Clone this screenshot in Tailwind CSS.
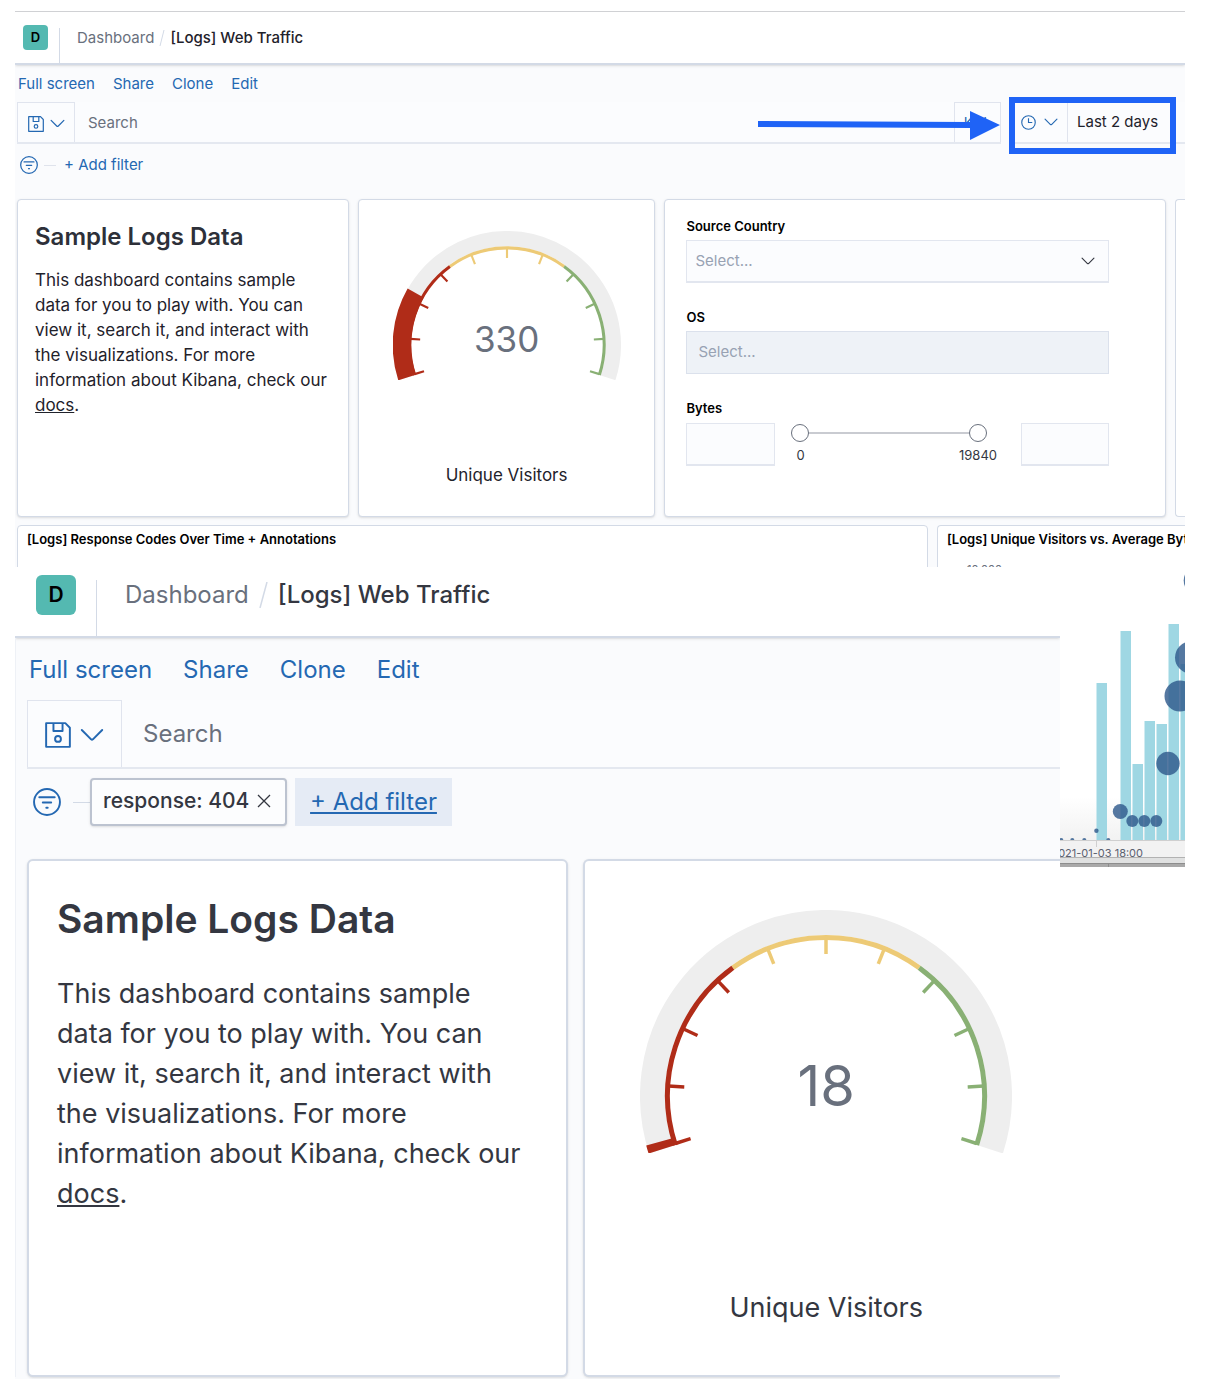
<!DOCTYPE html>
<html lang="en">
<head>
<meta charset="utf-8">
<title>[Logs] Web Traffic</title>
<script src="https://cdn.jsdelivr.net/npm/@tailwindcss/browser@4"></script>
</head>
<body class="bg-white font-['Inter',sans-serif] text-[#1f222b]">
<svg class="hidden">
  <symbol id="save" viewBox="0 0 16 16"><path fill="none" stroke="currentColor" stroke-width="1.2" stroke-linejoin="round" d="M.7.7h11.8l2.8 2.8v11.8H.7zM5.2.7v4.8h5.6V.7"/><circle cx="8" cy="10.4" r="1.8" fill="none" stroke="currentColor" stroke-width="1.2"/></symbol>
  <symbol id="down" viewBox="0 0 16 16"><path fill="none" stroke="currentColor" stroke-width="1.3" stroke-linecap="round" stroke-linejoin="round" d="M1.2 4.7 7.4 10.9q.6.5 1.2 0L14.8 4.7"/></symbol>
  <symbol id="filter" viewBox="0 0 16 16"><circle cx="8" cy="8" r="7.4" fill="none" stroke="currentColor" stroke-width="1.1"/><path fill="none" stroke="currentColor" stroke-linecap="round" stroke-width="1.1" d="M3.6 5.3h8.8M5.6 8.3h4.8M7.6 11.3h.8"/></symbol>
  <symbol id="dial" viewBox="-186 -186 372 243">
    <path fill="none" stroke="#eee" stroke-width="25" d="M-165 53.6A173.5 173.5 0 1 1 165 53.6"/>
    <g fill="none" stroke-width="5">
      <path stroke="#edca76" d="M-93.2-128.2A158.5 158.5 0 0 1 93.2-128.2"/>
      <path stroke="#b02c18" d="M-150.7 49A158.5 158.5 0 0 1-93.2-128.2"/>
      <path stroke="#89b074" d="M93.2-128.2A158.5 158.5 0 0 1 150.7 49"/>
    </g>
    <g stroke="#b02c18" stroke-width="3.5">
      <path d="M0-158V-142" transform="rotate(-107.5)"/><path d="M0-158V-142" transform="rotate(-86.4)"/><path d="M0-158V-142" transform="rotate(-64.8)"/><path d="M0-158V-142" transform="rotate(-43.2)"/>
    </g>
    <g stroke="#edca76" stroke-width="3.5">
      <path d="M0-158V-142" transform="rotate(-21.6)"/><path d="M0-158V-142"/><path d="M0-158V-142" transform="rotate(21.6)"/>
    </g>
    <g stroke="#89b074" stroke-width="3.5">
      <path d="M0-158V-142" transform="rotate(43.2)"/><path d="M0-158V-142" transform="rotate(64.8)"/><path d="M0-158V-142" transform="rotate(86.4)"/><path d="M0-158V-142" transform="rotate(107.5)"/>
    </g>
  </symbol>
</svg>

<main class="pt-[11px] pr-[43px] pl-[15px]">
  <!-- Dashboard with the time picker highlighted -->
  <section class="relative h-[556px] overflow-hidden border-t border-[#d0d1d4] bg-[#fafbfd]">
    <header class="flex h-[53px] items-start border-b-2 border-[#d3dae6] bg-white shadow-sm">
      <button class="mt-[13px] ml-2 h-[25px] w-[25px] rounded bg-[#54b9b1] text-[13px] font-semibold text-black">D</button>
      <div class="mt-4 ml-[11px] h-[35px] w-px bg-[#d3dae6]"></div>
      <nav class="mt-4 ml-[17px] flex items-center text-[15px] leading-5">
        <a href="#" class="text-[#69707d]">Dashboard</a>
        <svg class="mx-[5px] h-4 w-[6px]" viewBox="0 0 6 16"><path d="M1 16 5 0" stroke="#d3dae6"/></svg>
        <span class="font-medium">[Logs] Web Traffic</span>
      </nav>
    </header>
    <nav class="flex h-[37px] items-center gap-[18px] pt-0.5 pl-[3px] text-[15px] text-[#2468b2]">
      <a href="#">Full screen</a><a href="#">Share</a><a href="#">Clone</a><a href="#">Edit</a>
    </nav>
    <div class="flex h-[42px] pl-0.5">
      <div class="flex min-w-0 flex-1 border-b-2 border-[#e4e8f0] bg-[#fbfcfe]">
        <button aria-label="Saved queries" class="flex w-[58px] items-center justify-center gap-1.5 border border-b-0 border-[#e0e4ee] pt-0.5 text-[#2468b2]"><svg class="h-4 w-4"><use href="#save"/></svg><svg class="h-[15px] w-[15px]"><use href="#down"/></svg></button>
        <input aria-label="Search" placeholder="Search" class="min-w-0 flex-1 px-[13px] pt-0.5 text-[15px] outline-none placeholder:text-[#69707d]">
        <button class="w-[47px] border border-b-0 border-[#e0e4ee] text-[14px] text-[#2468b2]">KQL</button>
      </div>
      <div class="ml-3 flex w-[172px] border-b-2 border-[#e4e8f0] bg-[#fbfcfe]">
        <button aria-label="Quick time ranges" class="flex w-[55px] items-center gap-2 border-r border-[#e0e4ee] pl-2 text-[#2468b2]"><svg class="h-[15px] w-[15px]" viewBox="0 0 16 16"><circle cx="8" cy="8" r="7.2" fill="none" stroke="currentColor" stroke-width="1.2"/><path d="M8 3.5V8h4" fill="none" stroke="currentColor" stroke-width="1.2"/></svg><svg class="h-[14px] w-[14px]"><use href="#down"/></svg></button>
        <button class="px-[9px] text-[15px] whitespace-nowrap">Last 2 days</button>
      </div>
    </div>
    <div class="flex h-[42px] items-center pl-[5px] text-[15px] text-[#2468b2]">
      <svg class="h-[18px] w-[18px]"><use href="#filter"/></svg>
      <div class="mr-2 ml-1.5 h-px w-3 bg-[#dfe3ec]"></div>
      <button>+ Add filter</button>
    </div>

    <div class="mt-[13px] grid h-[318px] grid-cols-[332fr_298fr_502fr_10px] gap-[9px] pl-0.5">
      <article class="rounded border border-[#d3dae6] bg-white px-[17px] pt-[19px] shadow-sm">
        <h1 class="text-[24px] leading-9 font-semibold text-[#2d3039]">Sample Logs Data</h1>
        <p class="mt-[13px] text-[17px] leading-[25px] whitespace-nowrap">This dashboard contains sample<br>data for you to play with. You can<br>view it, search it, and interact with<br>the visualizations. For more<br>information about Kibana, check our<br><a href="#" class="underline">docs</a>.</p>
      </article>
      <article class="rounded border border-[#d3dae6] bg-white pt-[31px] text-center shadow-sm">
        <div class="relative mx-auto w-[228px]">
          <svg class="block w-full" viewBox="-186 -186 372 243"><use href="#dial" x="-186" y="-186" width="372" height="243"/><path fill="none" stroke="#b02c18" stroke-width="30" d="M-163.1 53A171.5 171.5 0 0 1-149.1-84.7"/></svg>
          <div class="absolute inset-x-0 bottom-[17px] text-[35px] leading-[48px] text-[#69707d]">330</div>
        </div>
        <div class="mt-[83px] text-[17px] leading-6">Unique Visitors</div>
      </article>
      <article class="rounded border border-[#d3dae6] bg-white pt-4 pr-[56px] pl-[21px] text-[13px] font-semibold text-black shadow-sm">
        <label for="country" class="block leading-5">Source Country</label>
        <div class="relative mt-1">
          <select id="country" class="h-[43px] w-full appearance-none border border-b-2 border-[#e2e6ef] bg-[#fbfcfe] px-2 text-[15px] font-normal text-[#98a2b3]"><option>Select...</option></select>
          <svg class="pointer-events-none absolute top-[14px] right-[14px] h-[14px] w-[14px] text-[#343741]"><use href="#down"/></svg>
        </div>
        <label for="os" class="mt-6 block leading-5">OS</label>
        <select id="os" disabled class="mt-1 block h-[43px] w-full appearance-none border border-[#dbe1ec] bg-[#eef2f7] px-[11px] text-[15px] font-normal text-[#98a2b3] opacity-100"><option>Select...</option></select>
        <label for="low" class="mt-6 block leading-5">Bytes</label>
        <div class="mt-[5px] flex items-start">
          <input id="low" aria-label="Minimum bytes" class="h-[43px] w-[89px] border border-b-2 border-[#e2e6ef] bg-[#fbfcfe] px-2 text-[15px]">
          <div class="mr-[34px] ml-4 flex-1">
            <div class="relative h-5">
              <div class="absolute inset-x-2 top-[9px] h-0.5 bg-[#c9cbd1]"></div>
              <input type="range" aria-label="Lower bound" min="0" max="19840" value="0" class="absolute inset-0 h-5 w-full appearance-none bg-transparent [&::-webkit-slider-thumb]:h-[18px] [&::-webkit-slider-thumb]:w-[18px] [&::-webkit-slider-thumb]:appearance-none [&::-webkit-slider-thumb]:rounded-full [&::-webkit-slider-thumb]:border [&::-webkit-slider-thumb]:border-[#69707d] [&::-webkit-slider-thumb]:bg-white">
              <input type="range" aria-label="Upper bound" min="0" max="19840" value="19840" class="pointer-events-none absolute inset-0 h-5 w-full appearance-none bg-transparent [&::-webkit-slider-thumb]:pointer-events-auto [&::-webkit-slider-thumb]:h-[18px] [&::-webkit-slider-thumb]:w-[18px] [&::-webkit-slider-thumb]:appearance-none [&::-webkit-slider-thumb]:rounded-full [&::-webkit-slider-thumb]:border [&::-webkit-slider-thumb]:border-[#69707d] [&::-webkit-slider-thumb]:bg-white">
            </div>
            <div class="-mr-2.5 flex justify-between pt-0.5 pl-[5px] text-[13px] leading-5 font-normal text-[#343741]"><span>0</span><span>19840</span></div>
          </div>
          <input aria-label="Maximum bytes" class="h-[43px] w-[88px] border border-b-2 border-[#e2e6ef] bg-[#fbfcfe] px-2 text-[15px]">
        </div>
      </article>
      <article class="rounded-l border border-r-0 border-[#d3dae6] bg-white"></article>
    </div>
    <div class="mt-2 grid h-[80px] grid-cols-[911fr_248fr] gap-[9px] pl-0.5 text-[13px] leading-5 font-semibold text-black">
      <article class="rounded border border-[#d3dae6] bg-white px-[9px] pt-[3px]">[Logs] Response Codes Over Time + Annotations</article>
      <article class="overflow-hidden rounded-l border border-r-0 border-[#d3dae6] bg-white px-[9px] pt-[3px] whitespace-nowrap">[Logs] Unique Visitors vs. Average Bytes<div class="mt-3 pl-5 text-[11px] leading-4 font-normal text-[#69707d]">10,000</div></article>
    </div>

    <div class="absolute top-[85px] right-[9px] h-[57px] w-[167px] border-[6px] border-[#1f63f6]"></div>
    <svg class="absolute top-[98px] right-[185px] h-[30px] w-[242px]" viewBox="0 0 242 30" fill="#1f63f6"><path d="M0 11 212 12V1L242 15 212 30V18L0 17z"/></svg>
  </section>

  <div class="flex items-start">
    <!-- Dashboard with the response filter applied -->
    <section class="h-[812px] min-w-0 flex-1 overflow-hidden bg-[#fafbfd]">
      <header class="flex h-[71px] items-start border-b-2 border-[#d3dae6] bg-white shadow">
        <button class="mt-2 ml-[21px] h-10 w-10 rounded-md bg-[#54b9b1] text-[21px] font-semibold text-black">D</button>
        <div class="mt-[13px] ml-5 h-14 w-px bg-[#d3dae6]"></div>
        <nav class="mt-3 ml-7 flex items-center text-[24px] leading-8">
          <a href="#" class="text-[#69707d]">Dashboard</a>
          <svg class="mx-2.5 h-[26px] w-[9px]" viewBox="0 0 9 26"><path d="M1 26 8 0" stroke="#d3dae6" stroke-width="1.5"/></svg>
          <span class="font-medium text-[#343741]">[Logs] Web Traffic</span>
        </nav>
      </header>
      <div class="border-l border-[#eef1f6]">
        <nav class="flex h-[62px] items-center gap-[31px] pt-0.5 pl-[13px] text-[24px] text-[#2468b2]">
          <a href="#">Full screen</a><a href="#">Share</a><a href="#">Clone</a><a href="#">Edit</a>
        </nav>
        <div class="ml-[11px] flex h-[69px] border-b-2 border-[#e4e8f0] bg-[#fbfcfe]">
          <button aria-label="Saved queries" class="flex w-[95px] items-center justify-center gap-[9px] border border-b-0 border-[#e0e4ee] pt-0.5 text-[#2468b2]"><svg class="h-[26px] w-[26px]"><use href="#save"/></svg><svg class="h-6 w-6"><use href="#down"/></svg></button>
          <input aria-label="Search" placeholder="Search" class="min-w-0 flex-1 px-[21px] text-[24px] outline-none placeholder:text-[#69707d]">
        </div>
        <div class="mt-[9px] flex h-12 items-center pl-[17px] text-[24px]">
          <svg class="h-7 w-7 text-[#2468b2]"><use href="#filter"/></svg>
          <div class="ml-3 h-px w-[17px] bg-[#d3dae6]"></div>
          <button class="flex h-12 w-[197px] items-center justify-between rounded border-2 border-[#bcc3d0] bg-[#fcfdfe] pr-[14px] pb-0.5 pl-[11px] text-[21px] font-medium whitespace-nowrap text-[#343741] shadow-sm">response: 404<svg class="h-[14px] w-[14px]" viewBox="0 0 14 14"><path d="m1 1 12 12M13 1 1 13" stroke="currentColor" stroke-width="1.3"/></svg></button>
          <button class="ml-2 h-12 w-[157px] bg-[#e5ebf5] text-[24px] text-[#2468b2] underline">+ Add filter</button>
        </div>
        <div class="mt-[33px] ml-[11px] grid h-[518px] grid-cols-[542fr_477fr] gap-[15px]">
          <article class="rounded-md border-2 border-[#d3dae6] bg-white px-7 pt-[30px] text-[#343741] shadow">
            <h2 class="text-[39px] leading-[56px] font-semibold">Sample Logs Data</h2>
            <p class="mt-[27px] text-[27px] leading-[40px] whitespace-nowrap">This dashboard contains sample<br>data for you to play with. You can<br>view it, search it, and interact with<br>the visualizations. For more<br>information about Kibana, check our<br><a href="#" class="underline">docs</a>.</p>
          </article>
          <article class="rounded-l-md border-2 border-r-0 border-[#d3dae6] bg-white pt-[49px] pl-[7px] text-center text-[#343741] shadow">
            <div class="relative mx-auto w-[372px]">
              <svg class="block w-full" viewBox="-186 -186 372 243"><use href="#dial" x="-186" y="-186" width="372" height="243"/><path fill="none" stroke="#b02c18" stroke-width="30" d="M-163.1 53A171.5 171.5 0 0 1-165.3 45.5"/></svg>
              <div class="absolute inset-x-0 bottom-8 text-[56px] leading-[70px] text-[#69707d]">18</div>
            </div>
            <div class="mt-[135px] text-[27px] leading-10">Unique Visitors</div>
          </article>
        </div>
      </div>
    </section>

    <!-- Right edge of the visitors chart -->
    <svg class="h-[300px] w-[125px] shrink-0" viewBox="0 0 125 300">
      <defs><linearGradient id="fade" x2="0" y2="1"><stop stop-color="#fff"/><stop offset="1" stop-color="#f2f2f2"/></linearGradient></defs>
      <rect y="230" width="125" height="43" fill="url(#fade)"/>
      <g fill="#9fd7e3"><path d="M36.5 116H47V273H36.5zM60.5 64H71V273H60.5zM72.5 197H83V273H72.5zM84.5 154H95V273H84.5zM96.5 157H107V273H96.5zM108.5 57H119V273H108.5zM120.5 97H125V273H120.5z"/></g>
      <g fill="#2f5a8c" fill-opacity=".82"><circle cx="137.5" cy="13.5" r="13.8"/><circle cx="131" cy="90.5" r="16"/><circle cx="120" cy="129" r="15.5"/><circle cx="108" cy="196.5" r="11.7"/><circle cx="60.3" cy="244.5" r="7.5"/><circle cx="72.3" cy="254" r="6"/><circle cx="84.3" cy="254" r="6"/><circle cx="96.3" cy="254" r="6"/><circle cx="36.4" cy="263.7" r="2.2"/><circle cx="1.3" cy="273" r="2"/><circle cx="12.3" cy="273" r="2"/><circle cx="24.3" cy="273" r="2"/><circle cx="48.3" cy="273" r="2"/></g>
      <path fill="#f2f2f2" d="M0 273h125v17H0z"/><path fill="#e0e1e1" d="M0 290h125v6H0z"/><path fill="#a9a9a9" d="M0 296h125v4H0z"/>
      <path fill="none" stroke="#cfcfcf" d="M0 273.5h125M36.5 273v7"/><path fill="none" stroke="#b2b2b2" d="M0 290.5h125"/><path fill="none" stroke="#8d8d8d" d="M0 296.5h125M48.5 297v3"/>
      <text x="83" y="290" text-anchor="end" font-size="11" fill="#5a6070">2021-01-03 18:00</text>
    </svg>
  </div>
</main>
</body>
</html>
